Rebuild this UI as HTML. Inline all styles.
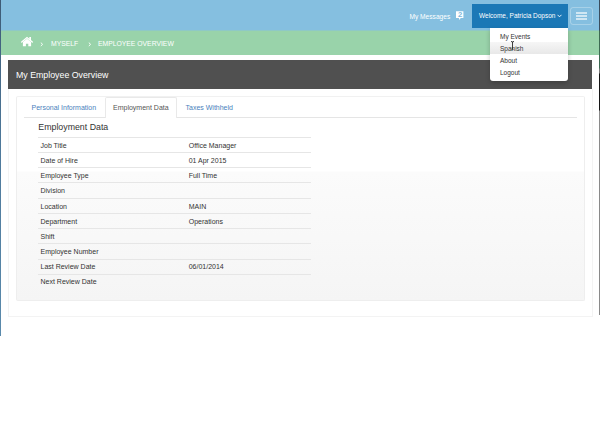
<!DOCTYPE html>
<html><head><meta charset="utf-8">
<style>
html,body{margin:0;padding:0;width:600px;height:425px;overflow:hidden;background:#fff;font-family:"Liberation Sans",sans-serif;}
.abs{position:absolute;}
#hdr{left:0;top:0;width:600px;height:31px;background:linear-gradient(#85bfe0 0,#85bfe0 30px,#8fc9c5 30px,#8fc9c5 31px);}
#crumb{left:0;top:31px;width:600px;height:24px;background:#99d3aa;}
#title{left:8px;top:60px;width:584px;height:29px;background:#505050;}
#title span{position:absolute;left:8px;top:9.5px;font-size:8.8px;color:#fff;white-space:nowrap;}
#outer{left:8px;top:89px;width:583px;height:227px;border:1px solid #f3f3f3;border-top:none;background:#fff;}
#inner{left:16px;top:96px;width:567px;height:203px;border:1px solid #eeeeee;border-top-color:#f1f1f1;border-radius:2px;background:linear-gradient(#fff 0px,#fff 74px,#fbfbfb 75px,#f8f8f8 140px,#f5f5f5 203px);}
.t{position:absolute;white-space:nowrap;font-size:7px;color:#333;line-height:7px;}
.line{position:absolute;height:1px;background:#e6e6e6;left:38px;width:273px;}
.w{color:#fff;}
.dd{position:absolute;left:500px;font-size:6.5px;color:#333;white-space:nowrap;line-height:7px;}
</style></head><body>
<div class="abs" id="hdr"></div>
<div class="abs" id="crumb"></div>
<div class="abs" id="title"><span>My Employee Overview</span></div>
<div class="abs" id="outer"></div>
<div class="abs" id="inner"></div>

<!-- header nav -->
<div class="t w" style="left:409.5px;top:12.5px;font-size:6.6px;">My Messages</div>
<svg class="abs" style="left:455px;top:10px" width="10" height="11" viewBox="0 0 10 11">
  <path d="M1 1.2 H8.4 V8 H5.6 L4.7 10 L3.8 8 H1 Z" fill="#fff"/>
  <text x="5.2" y="7.4" font-family="Liberation Sans" font-size="7.6" font-weight="bold" fill="#7db8dc" text-anchor="middle">2</text>
</svg>
<div class="abs" style="left:472px;top:4px;width:96px;height:24px;background:#1b78b6;"></div>
<div class="t w" style="left:479px;top:12px;font-size:6.5px;">Welcome, Patricia Dopson</div>
<svg class="abs" style="left:556.5px;top:13.5px" width="5" height="4" viewBox="0 0 5 4"><path d="M0.5 0.8 L2.5 2.8 L4.5 0.8" stroke="#fff" stroke-width="0.9" fill="none"/></svg>
<div class="abs" style="left:570px;top:7px;width:21px;height:16px;border:1px solid rgba(255,255,255,0.28);border-radius:3px;"></div>
<div class="abs" style="left:576px;top:12px;width:11px;height:2px;background:rgba(255,255,255,0.62);"></div>
<div class="abs" style="left:576px;top:15px;width:11px;height:2px;background:rgba(255,255,255,0.62);"></div>
<div class="abs" style="left:576px;top:18px;width:11px;height:2px;background:rgba(255,255,255,0.62);"></div>

<!-- breadcrumb -->
<svg class="abs" style="left:21px;top:36px" width="12" height="11" viewBox="0 0 12 11">
  <path d="M0.7 6.1 L6 1.6 L11.3 6.1" stroke="#fff" stroke-width="1.3" fill="none" stroke-linecap="round"/>
  <rect x="8.3" y="1" width="1.7" height="3.3" fill="#fff"/>
  <path d="M1.9 6 L6 2.8 L10.1 6 V10.3 H7.3 V7.7 H4.9 V10.3 H1.9 Z" fill="#fff"/>
</svg>
<svg class="abs" style="left:39.5px;top:41.5px" width="4" height="5" viewBox="0 0 4 5"><path d="M0.8 0.6 L2.6 2.3 L0.8 4.0" stroke="#fff" stroke-width="0.95" fill="none"/></svg>
<div class="t w" style="left:51px;top:40.4px;font-size:6.8px;">MYSELF</div>
<svg class="abs" style="left:88.3px;top:41.5px" width="4" height="5" viewBox="0 0 4 5"><path d="M0.8 0.6 L2.6 2.3 L0.8 4.0" stroke="#fff" stroke-width="0.95" fill="none"/></svg>
<div class="t w" style="left:98px;top:40.4px;font-size:6.8px;">EMPLOYEE OVERVIEW</div>

<!-- tabs -->
<div class="abs" style="left:24px;top:117px;width:553px;height:1px;background:#e5e5e5;"></div>
<div class="abs" style="left:105px;top:97px;width:70px;height:20px;border:1px solid #e9e9e9;border-bottom:none;border-radius:2px 2px 0 0;background:#fff;"></div>
<div class="t" style="left:31.5px;top:104px;color:#4a7fbd;">Personal Information</div>
<div class="t" style="left:113px;top:104px;color:#555;">Employment Data</div>
<div class="t" style="left:185.5px;top:104px;color:#4a7fbd;">Taxes Withheld</div>

<div class="t" style="left:38.3px;top:123px;font-size:8.8px;line-height:9px;color:#333;">Employment Data</div>

<!-- table -->
<div class="line" style="top:137px"></div>
<div class="line" style="top:152px"></div>
<div class="line" style="top:167px"></div>
<div class="line" style="top:182px"></div>
<div class="line" style="top:198px"></div>
<div class="line" style="top:213px"></div>
<div class="line" style="top:228px"></div>
<div class="line" style="top:243px"></div>
<div class="line" style="top:259px"></div>
<div class="line" style="top:274px"></div>

<div class="t" style="left:40.5px;top:141.5px">Job Title</div>
<div class="t" style="left:188.7px;top:141.5px">Office Manager</div>
<div class="t" style="left:40.5px;top:156.5px">Date of Hire</div>
<div class="t" style="left:188.7px;top:156.5px">01 Apr 2015</div>
<div class="t" style="left:40.5px;top:171.5px">Employee Type</div>
<div class="t" style="left:188.7px;top:171.5px">Full Time</div>
<div class="t" style="left:40.5px;top:187px">Division</div>
<div class="t" style="left:40.5px;top:202.5px">Location</div>
<div class="t" style="left:188.7px;top:202.5px">MAIN</div>
<div class="t" style="left:40.5px;top:217.5px">Department</div>
<div class="t" style="left:188.7px;top:217.5px">Operations</div>
<div class="t" style="left:40.5px;top:232.5px">Shift</div>
<div class="t" style="left:40.5px;top:247.5px">Employee Number</div>
<div class="t" style="left:40.5px;top:263px">Last Review Date</div>
<div class="t" style="left:188.7px;top:263px">06/01/2014</div>
<div class="t" style="left:40.5px;top:278px">Next Review Date</div>

<!-- dropdown -->
<div class="abs" style="left:490px;top:28px;width:78px;height:52.5px;background:#fff;border-radius:0 0 3px 3px;box-shadow:0 2px 5px rgba(0,0,0,0.22);"></div>
<div class="abs" style="left:490px;top:42.4px;width:78px;height:12px;background:linear-gradient(#f6f6f6,#e8e8e8);"></div>
<div class="dd" style="top:33px">My Events</div>
<div class="dd" style="top:45.2px">Spanish</div>
<div class="dd" style="top:56.6px">About</div>
<div class="dd" style="top:68.5px">Logout</div>
<!-- I-beam cursor -->
<svg class="abs" style="left:510px;top:40px" width="6" height="11" viewBox="0 0 6 11">
  <path d="M1 1.6 Q2.5 1.2 2.5 2.4 Q2.5 1.2 4 1.6 M2.5 2 V9 M1.5 9.3 H3.5" stroke="#2a2a2a" stroke-width="0.9" fill="none"/>
</svg>

<!-- left/right window edges -->
<div class="abs" style="left:0;top:0;width:1px;height:336px;background:linear-gradient(#3d5a75,#4f7a9c 150px,#5a8aac)"></div>
<div class="abs" style="left:599px;top:0;width:1px;height:315px;background:linear-gradient(#3a4d5e 0,#3a4d5e 30px,#3d6a52 31px,#3d6a52 68px,#777 69px,#777 73px,#151515 74px,#151515 110px,#8a8a8a 111px,#8a8a8a 315px)"></div>
</body></html>
